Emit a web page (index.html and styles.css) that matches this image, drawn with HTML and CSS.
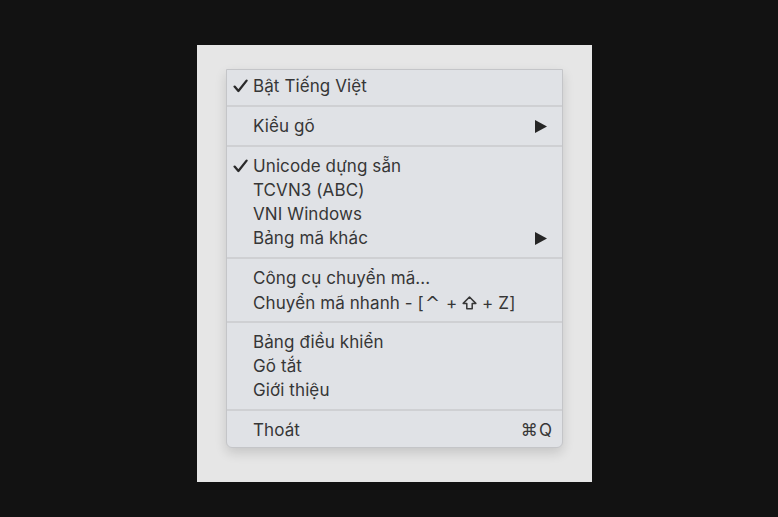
FILE: index.html
```html
<!DOCTYPE html>
<html lang="vi">
<head>
<meta charset="utf-8">
<link rel="stylesheet" href="styles.css">
</head>
<body>
<div class="panel">
  <div class="menu">
    <div class="item"><span class="check"><svg width="15" height="14" viewBox="0 0 15 14"><path d="M1.6 7.6 L5.4 12 L13.6 1.6" fill="none" stroke="#2a2a2a" stroke-width="2.3" stroke-linecap="round" stroke-linejoin="round"/></svg></span><span class="label">Bật Tiếng Việt</span></div>
    <div class="sep"></div>
    <div class="item"><span class="check"></span><span class="label">Kiểu gõ</span><span class="arrow"><svg width="12" height="13" viewBox="0 0 12 13"><polygon points="0,0 12,6.5 0,13" fill="#262626"/></svg></span></div>
    <div class="sep"></div>
    <div class="item"><span class="check"><svg width="15" height="14" viewBox="0 0 15 14"><path d="M1.6 7.6 L5.4 12 L13.6 1.6" fill="none" stroke="#2a2a2a" stroke-width="2.3" stroke-linecap="round" stroke-linejoin="round"/></svg></span><span class="label">Unicode dựng sẵn</span></div>
    <div class="item"><span class="check"></span><span class="label">TCVN3 (ABC)</span></div>
    <div class="item"><span class="check"></span><span class="label">VNI Windows</span></div>
    <div class="item"><span class="check"></span><span class="label">Bảng mã khác</span><span class="arrow"><svg width="12" height="13" viewBox="0 0 12 13"><polygon points="0,0 12,6.5 0,13" fill="#262626"/></svg></span></div>
    <div class="sep"></div>
    <div class="item"><span class="check"></span><span class="label">Công cụ chuyển mã...</span></div>
    <div class="item"><span class="check"></span><span class="label">Chuyển mã nhanh - [<span class="caret">^</span> + <svg class="shift" width="15" height="14" viewBox="0 0 15 14"><path d="M7.5 1 L13.8 7.4 L10.2 7.4 L10.2 12.8 L4.8 12.8 L4.8 7.4 L1.2 7.4 Z" fill="none" stroke="#363636" stroke-width="1.5" stroke-linejoin="round"/></svg> + Z]</span></div>
    <div class="sep"></div>
    <div class="item"><span class="check"></span><span class="label">Bảng điều khiển</span></div>
    <div class="item"><span class="check"></span><span class="label">Gõ tắt</span></div>
    <div class="item"><span class="check"></span><span class="label">Giới thiệu</span></div>
    <div class="sep"></div>
    <div class="item"><span class="check"></span><span class="label">Thoát</span><span class="shortcut"><span class="cmd">⌘</span>Q</span></div>
  </div>
</div>
</body>
</html>
```
FILE: styles.css
```css
html, body {
  margin: 0;
  padding: 0;
}
body {
  background: #121212;
  width: 778px;
  height: 517px;
  overflow: hidden;
  font-family: "Inter", "Noto Sans", "DejaVu Sans", sans-serif;
}
.panel {
  margin: 45px 0 0 197px;
  width: 395px;
  height: 437px;
  box-sizing: border-box;
  padding: 24px 29px 0 29px;
  background: #e6e6e6;
}
.menu {
  width: 337px;
  box-sizing: border-box;
  border: 1px solid #c4c5c8;
  border-radius: 0 0 6px 6px;
  background: #e0e2e6;
  padding: 4px 0 5px;
  box-shadow: 0 5px 12px rgba(0, 0, 0, 0.14);
}
.item {
  display: flex;
  align-items: center;
  height: 24px;
  padding-right: 10px;
  color: #363636;
  font-size: 17px;
  letter-spacing: 0.1px;
}
.check {
  width: 26px;
  flex: none;
  box-sizing: border-box;
  padding-left: 6px;
  display: flex;
  align-items: center;
}
.check svg { display: block; }
.label {
  flex: 1;
  white-space: nowrap;
}
.caret {
  font-family: "DejaVu Sans", sans-serif;
  font-size: 18px;
  margin: 0 1px;
}
.shift {
  display: inline-block;
  vertical-align: -1px;
  margin: 0;
}
.arrow {
  margin-right: 5px;
  display: flex;
}
.arrow svg { display: block; }
.shortcut {
  white-space: nowrap;
  color: #363636;
}
.cmd {
  font-family: "DejaVu Sans", sans-serif;
  font-size: 17px;
  margin-right: 1px;
}
.sep {
  height: 16px;
  display: flex;
  align-items: center;
}
.sep::before {
  content: "";
  display: block;
  width: 100%;
  height: 2px;
  background: #cfd0d3;
}
```
